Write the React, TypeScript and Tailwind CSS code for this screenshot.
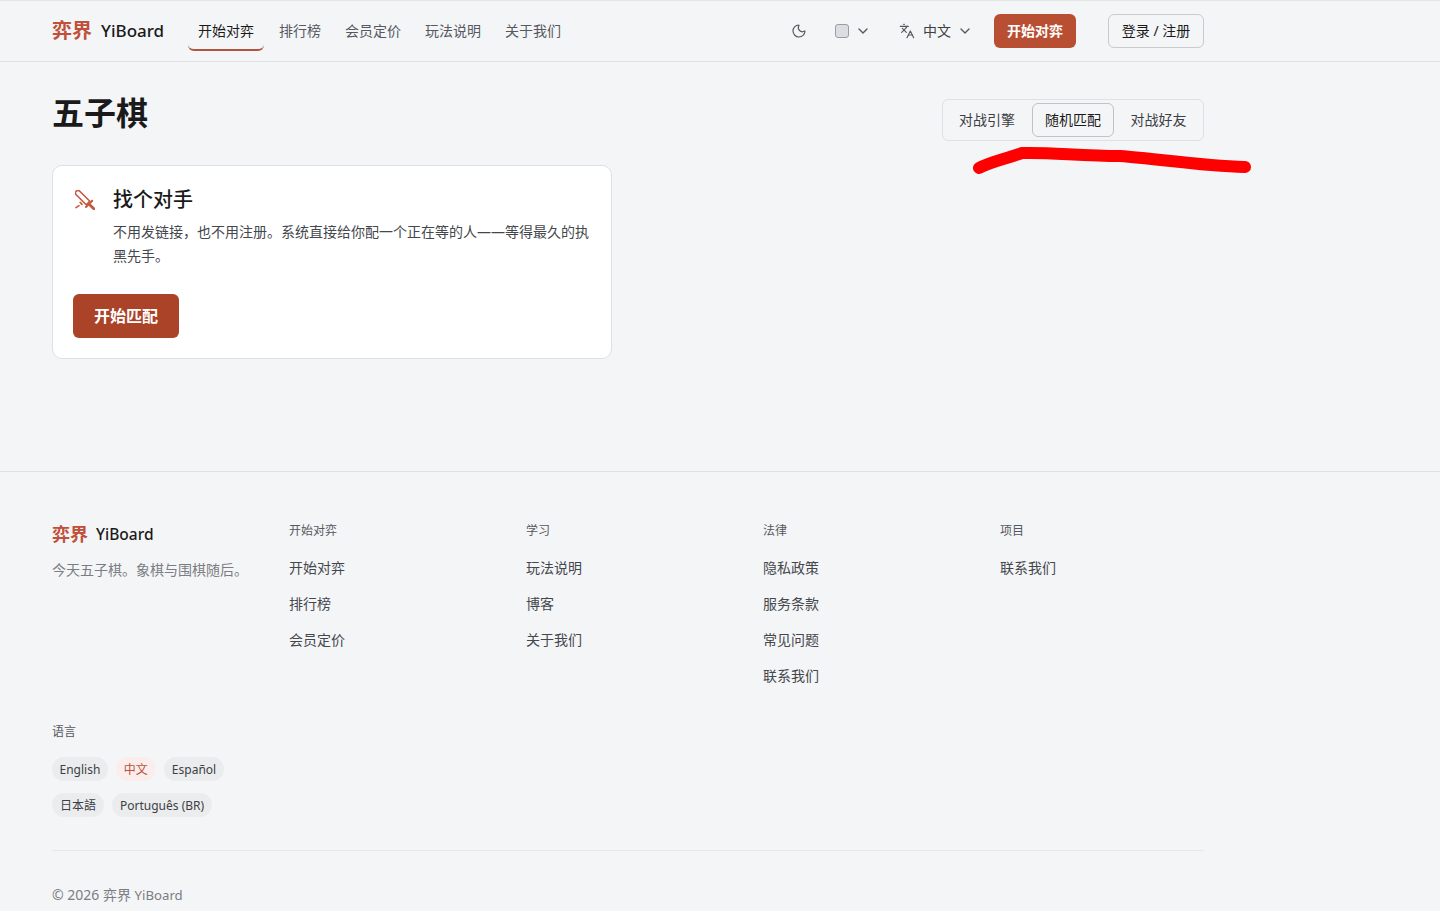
import { ChevronDown, Languages, Moon } from "lucide-react"

const navItems = ["排行榜", "会员定价", "玩法说明", "关于我们"]

const footerColumns = [
  { title: "开始对弈", links: ["开始对弈", "排行榜", "会员定价"] },
  { title: "学习", links: ["玩法说明", "博客", "关于我们"] },
  { title: "法律", links: ["隐私政策", "服务条款", "常见问题", "联系我们"] },
  { title: "项目", links: ["联系我们"] },
]

function Logo({ small }: { small?: boolean }) {
  return (
    <div className={`flex shrink-0 items-center whitespace-nowrap ${small ? "gap-[8px]" : "w-[112px] gap-[9px]"}`}>
      <span className={`font-bold text-[#c0503a] ${small ? "text-[18px]" : "text-[20px]"}`}>弈界</span>
      <span className={`font-medium text-[#1a1a1a] ${small ? "text-[15.5px]" : "text-[17px]"}`}>YiBoard</span>
    </div>
  )
}

function SwordIcon() {
  return (
    <svg className="h-5 w-5 shrink-0 text-[#c4583f]" viewBox="0 0 20 20" fill="none" stroke="currentColor" strokeWidth="1.6" strokeLinecap="round" strokeLinejoin="round">
      <path d="M1.2 4.8 a2.5 2.5 0 0 1 3.6 -3.6 L14.8 11.2 L11.2 14.8 Z" />
      <path d="M11 17 L17.2 10.8" strokeWidth="2" />
      <path d="M15.2 15.2 L18.8 18.8" strokeWidth="2.8" />
      <path d="M1 17.6 L4 15.6 M5.2 12.4 L7 14.4" />
    </svg>
  )
}

export default function App() {
  return (
    <div className="relative min-h-[911px] overflow-hidden bg-[#f4f5f7] font-['Noto_Sans','Noto_Sans_CJK_SC',sans-serif] text-[#1a1a1a]">
      <header className="h-[62px] border-y border-t-[#e3e4e6] border-b-[#dfe0e3]">
        <div className="ml-[52px] flex h-[60px] w-[1152px] items-center">
          <Logo />
          <nav className="ml-[24px] flex items-center text-[14px] text-[#55585e]">
            <a className="flex h-[40px] w-[76px] items-center justify-center rounded-b-[6px] border-b-2 border-[#b4533f] text-[#1a1a1a]">开始对弈</a>
            <div className="ml-[15px] flex gap-[24px] pb-[2px]">
              {navItems.map((item) => (
                <a key={item}>{item}</a>
              ))}
            </div>
          </nav>
          <div className="ml-auto flex items-center">
            <Moon className="h-4 w-4 text-[#55585e]" strokeWidth={1.75} />
            <div className="ml-[28px] h-[14px] w-[14px] rounded-[3px] border border-[#9a9da3] bg-[#dcdde0]" />
            <ChevronDown className="ml-[6px] h-4 w-4 text-[#55585e]" strokeWidth={2} />
            <Languages className="ml-[28px] h-4 w-4 text-[#55585e]" strokeWidth={1.75} />
            <span className="ml-[8px] pb-[2px] text-[14px] text-[#3c3f44]">中文</span>
            <ChevronDown className="ml-[6px] h-4 w-4 text-[#55585e]" strokeWidth={2} />
            <button className="ml-[21px] flex h-[34px] w-[82px] items-center justify-center rounded-[6px] bg-[#b94f32] pb-[2px] text-[14px] font-bold text-white">开始对弈</button>
            <button className="ml-[32px] flex h-[34px] w-[96px] items-center justify-center rounded-[6px] border border-[#c9cbcf] pb-[2px] text-[14px] text-[#1a1a1a]">登录 / 注册</button>
          </div>
        </div>
      </header>

      <main className="ml-[52px] h-[409px] w-[1152px] pt-[29px]">
        <div className="flex h-[44px] items-start justify-between">
          <h1 className="text-[32px] leading-[44px] font-bold text-[#1a1a1a]">五子棋</h1>
          <div className="mt-[8px] flex h-[42px] w-[262px] items-center rounded-[6px] border border-[#dfe0e3] pl-[3px] text-[14px] text-[#3c3f44]">
            <span className="w-[82px] pb-[2px] text-center">对战引擎</span>
            <span className="ml-[4px] flex h-[34px] w-[82px] items-center justify-center rounded-[6px] border border-[#c0c2c6] pb-[2px] text-[#1a1a1a]">随机匹配</span>
            <span className="w-[89px] pb-[2px] text-center">对战好友</span>
          </div>
        </div>
        <section className="mt-[30px] h-[194px] w-[560px] rounded-[10px] border border-[#dfe0e3] bg-white pt-[20px] pl-[20px]">
          <div className="flex">
            <div className="mt-[4px] ml-[2px]">
              <SwordIcon />
            </div>
            <div className="ml-[18px] w-[480px]">
              <h2 className="text-[20px] leading-[28px] font-medium text-[#1a1a1a]">找个对手</h2>
              <p className="mt-[6px] text-[14px] leading-[24px] text-[#44474c]">不用发链接，也不用注册。系统直接给你配一个正在等的人——等得最久的执黑先手。</p>
            </div>
          </div>
          <button className="mt-[26px] flex h-[44px] w-[106px] items-center justify-center rounded-[6px] bg-[#ab4329] text-[16px] font-bold text-white">开始匹配</button>
        </section>
      </main>

      <footer className="border-t border-[#dfe0e3]">
        <div className="ml-[52px] w-[1152px] pt-[49px]">
          <div className="flex">
            <div className="w-[237px] shrink-0">
              <Logo small />
              <p className="mt-[11px] text-[14px] text-[#7a7d83]">今天五子棋。象棋与围棋随后。</p>
            </div>
            {footerColumns.map((col) => (
              <div key={col.title} className="w-[237px] shrink-0 pt-[2px]">
                <h3 className="text-[12px] leading-[16px] text-[#55585e]">{col.title}</h3>
                <ul className="mt-[10px] text-[14px] text-[#44474c]">
                  {col.links.map((link) => (
                    <li key={link} className="flex h-[36px] items-center">{link}</li>
                  ))}
                </ul>
              </div>
            ))}
          </div>
          <h3 className="mt-[31px] text-[12px] leading-[16px] text-[#55585e]">语言</h3>
          <div className="mt-[17px] flex flex-col gap-[12px] text-[12px] text-[#3c3f44]">
            <div className="flex gap-[8px]">
              <span className="flex h-[24px] items-center rounded-full bg-[#ebecee] px-[7.5px] pt-px">English</span>
              <span className="flex h-[24px] items-center rounded-full bg-[#f9eeec] px-[8px] pt-px text-[#c0503a]">中文</span>
              <span className="flex h-[24px] items-center rounded-full bg-[#ebecee] px-[8px] pt-px">Español</span>
            </div>
            <div className="flex gap-[8px]">
              <span className="flex h-[24px] items-center rounded-full bg-[#ebecee] px-[8px] pt-px">日本語</span>
              <span className="flex h-[24px] items-center rounded-full bg-[#ebecee] px-[8px] pt-px">Português (BR)</span>
            </div>
          </div>
          <div className="mt-[33px] border-t border-[#e6e7e9] pt-[33px] text-[14px] text-[#7a7d83]">© 2026 弈界 <span className="text-[13.2px]">YiBoard</span></div>
        </div>
      </footer>

      {/* red marker stroke drawn over the page */}
      <svg className="absolute top-0 left-0 h-[911px] w-[1440px]" viewBox="0 0 1440 911" fill="none">
        <path d="M979 168 C990 162 1002 160 1022 153 C1050 152 1080 156 1120 156 C1160 159 1200 166 1245 167" stroke="#fe0000" strokeWidth="12" strokeLinecap="round" strokeLinejoin="round" />
      </svg>
    </div>
  )
}
